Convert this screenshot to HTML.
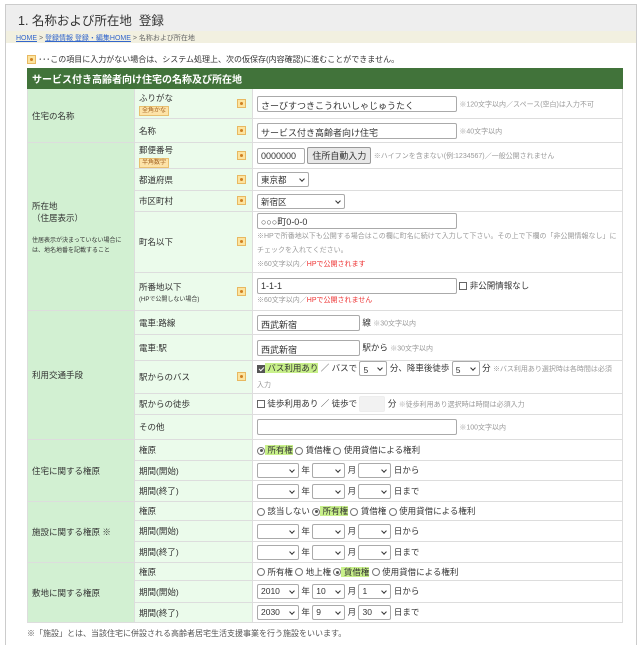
<!DOCTYPE html>
<html style="height:645px;overflow:hidden"><head><meta charset="utf-8"><style>
*{margin:0;padding:0;box-sizing:border-box}
body{width:644px;height:645px;background:#fff;font-family:"Liberation Sans","Noto Sans CJK JP",sans-serif;font-size:9px;color:#333;position:relative;overflow:hidden}
.frame{position:absolute;left:5px;top:4px;width:632px;height:645px;border:1px solid #ccc;border-bottom:none}
.title{position:absolute;left:6px;top:5px;width:630px;height:26px;background:#eee;font-size:12.5px;padding:5px 0 0 12px;color:#333}
.bc{position:absolute;left:6px;top:31px;width:630px;height:12px;background:#f2f0e0;font-size:7px;padding:2px 0 0 10px;color:#666}
.bc a{color:#3366cc;text-decoration:underline}
.req{display:inline-block;width:9px;height:9px;background:#fce4a0;border:1px solid #e8b860;position:relative;vertical-align:middle}
.req:after{content:"";position:absolute;left:2px;top:2px;width:3px;height:3px;background:#d08020;border-radius:50%}
.notice{position:absolute;left:27px;top:54px;font-size:8px}
table{position:absolute;left:27px;top:68px;width:595px;border-collapse:collapse;table-layout:fixed}
td{border:1px solid #ddd;vertical-align:middle;padding:0 4px;font-size:8.5px}
th{background:#41733a;color:#fff;text-align:left;height:20px;padding-left:4px;font-size:10px;border:1px solid #41733a}
.c1{background:#d2f0d2;color:#333}
.c2{background:#ebfbeb;position:relative}
.c2 .req{position:absolute;right:6px;top:50%;margin-top:-5px}
.tag{display:inline-block;background:#fde3a8;border:1px solid #e8c070;font-size:6px;padding:0 2px;color:#a06020;line-height:8px}
.inp{display:inline-block;border:1px solid #aaa;border-radius:2px;height:16px;vertical-align:middle;padding:2px 3px;font-size:9px;background:#fff}
.n{color:#999;font-size:7px}
.r{color:#e33}
.sel{display:inline-block;border:1px solid #aaa;border-radius:2px;height:15px;vertical-align:middle;padding:1px 3px;font-size:8.5px;background:#fff;position:relative}
.sel:after{content:"";position:absolute;right:4px;top:4px;width:3px;height:3px;border-right:1px solid #333;border-bottom:1px solid #333;transform:rotate(45deg)}
.btn{display:inline-block;border:1px solid #999;background:#e8e8e8;font-size:9px;padding:1px 4px;vertical-align:middle;border-radius:2px}
.cb{display:inline-block;width:8px;height:8px;border:1px solid #666;vertical-align:middle;background:#fff;position:relative}
.cb.on{background:#555;border-color:#555}
.cb.on:after{content:"";position:absolute;left:2px;top:0px;width:2px;height:4px;border-right:1px solid #fff;border-bottom:1px solid #fff;transform:rotate(45deg)}
.rd{display:inline-block;width:8px;height:8px;border:1px solid #777;border-radius:50%;vertical-align:middle;background:#fff;position:relative}
.rd.on:after{content:"";position:absolute;left:1.5px;top:1.5px;width:3px;height:3px;background:#555;border-radius:50%}
.hl{background:#c8f08a}
.foot{position:absolute;left:27px;top:628px;font-size:8px;color:#555}
</style></head><body>
<div class="frame"></div>
<div class="title">1. 名称および所在地&nbsp;&nbsp;登録</div>
<div class="bc"><a>HOME</a> &gt; <a>登録情報 登録・編集HOME</a> &gt; 名称および所在地</div>
<div class="notice"><span class="req"></span>&nbsp;･･･この項目に入力がない場合は、システム処理上、次の仮保存(内容確認)に進むことができません。</div>
<table>
<colgroup><col style="width:107px"><col style="width:118px"><col style="width:370px"></colgroup>
<tr><th colspan="3">サービス付き高齢者向け住宅の名称及び所在地</th></tr>
<tr style="height:30px"><td class="c1" rowspan="2">住宅の名称</td><td class="c2">ふりがな<br><span class="tag">全角かな</span><span class="req"></span></td><td><span class="inp" style="width:200px">さーびすつきこうれいしゃじゅうたく</span> <span class="n">※120文字以内／スペース(空白)は入力不可</span></td></tr>
<tr style="height:24px"><td class="c2">名称<span class="req"></span></td><td><span class="inp" style="width:200px">サービス付き高齢者向け住宅</span> <span class="n">※40文字以内</span></td></tr>
<tr style="height:26px"><td class="c1" rowspan="5">所在地<br>（住居表示）<br><br><span style="font-size:6px">住居表示が決まっていない場合には、地名地番を記載すること</span></td><td class="c2">郵便番号<br><span class="tag">半角数字</span><span class="req"></span></td><td><span class="inp" style="width:48px">0000000</span> <span class="btn">住所自動入力</span> <span class="n">※ハイフンを含まない(例:1234567)／一般公開されません</span></td></tr>
<tr style="height:22px"><td class="c2">都道府県<span class="req"></span></td><td><span class="sel" style="width:52px">東京都</span></td></tr>
<tr style="height:21px"><td class="c2">市区町村<span class="req"></span></td><td><span class="sel" style="width:88px">新宿区</span></td></tr>
<tr style="height:61px"><td class="c2">町名以下<span class="req"></span></td><td style="line-height:12px"><span class="inp" style="width:200px">○○○町0-0-0</span><br><span class="n">※HPで所番地以下も公開する場合はこの欄に町名に続けて入力して下さい。その上で下欄の「非公開情報なし」にチェックを入れてください。<br>※60文字以内／<span class="r">HPで公開されます</span></span></td></tr>
<tr style="height:38px"><td class="c2">所番地以下<br><span style="font-size:6px">(HPで公開しない場合)</span><span class="req"></span></td><td><span class="inp" style="width:200px">1-1-1</span> <span class="cb"></span> 非公開情報なし<br><span class="n">※60文字以内／<span class="r">HPで公開されません</span></span></td></tr>
<tr style="height:24px"><td class="c1" rowspan="5">利用交通手段</td><td class="c2">電車:路線</td><td><span class="inp" style="width:103px">西武新宿</span> 線 <span class="n">※30文字以内</span></td></tr>
<tr style="height:26px"><td class="c2">電車:駅</td><td><span class="inp" style="width:103px">西武新宿</span> 駅から <span class="n">※30文字以内</span></td></tr>
<tr style="height:33px"><td class="c2">駅からのバス<span class="req"></span></td><td style="line-height:15px"><span class="cb on"></span><span class="hl"> バス利用あり</span> ／ バスで <span class="sel" style="width:28px">5</span> 分、降車後徒歩 <span class="sel" style="width:28px">5</span> 分 <span class="n">※バス利用あり選択時は各時間は必須入力</span></td></tr>
<tr style="height:21px"><td class="c2">駅からの徒歩</td><td><span class="cb"></span> 徒歩利用あり ／ 徒歩で <span class="inp" style="width:26px;background:#f2f2f2;border-color:#eee"></span> 分 <span class="n">※徒歩利用あり選択時は時間は必須入力</span></td></tr>
<tr style="height:25px"><td class="c2">その他</td><td><span class="inp" style="width:200px"></span> <span class="n">※100文字以内</span></td></tr>
<tr style="height:21px"><td class="c1" rowspan="3">住宅に関する権原</td><td class="c2">権原</td><td><span class="rd on"></span><span class="hl"> 所有権</span> <span class="rd"></span> 賃借権 <span class="rd"></span> 使用貸借による権利</td></tr>
<tr style="height:20px"><td class="c2">期間(開始)</td><td><span class="sel" style="width:42px"></span> 年 <span class="sel" style="width:33px"></span> 月 <span class="sel" style="width:33px"></span> 日から</td></tr>
<tr style="height:21px"><td class="c2">期間(終了)</td><td><span class="sel" style="width:42px"></span> 年 <span class="sel" style="width:33px"></span> 月 <span class="sel" style="width:33px"></span> 日まで</td></tr>
<tr style="height:19px"><td class="c1" rowspan="3">施設に関する権原 ※</td><td class="c2">権原</td><td><span class="rd"></span> 該当しない <span class="rd on"></span><span class="hl"> 所有権</span> <span class="rd"></span> 賃借権 <span class="rd"></span> 使用貸借による権利</td></tr>
<tr style="height:21px"><td class="c2">期間(開始)</td><td><span class="sel" style="width:42px"></span> 年 <span class="sel" style="width:33px"></span> 月 <span class="sel" style="width:33px"></span> 日から</td></tr>
<tr style="height:21px"><td class="c2">期間(終了)</td><td><span class="sel" style="width:42px"></span> 年 <span class="sel" style="width:33px"></span> 月 <span class="sel" style="width:33px"></span> 日まで</td></tr>
<tr style="height:18px"><td class="c1" rowspan="3">敷地に関する権原</td><td class="c2">権原</td><td><span class="rd"></span> 所有権 <span class="rd"></span> 地上権 <span class="rd on"></span><span class="hl"> 賃借権</span> <span class="rd"></span> 使用貸借による権利</td></tr>
<tr style="height:22px"><td class="c2">期間(開始)</td><td><span class="sel" style="width:42px">2010</span> 年 <span class="sel" style="width:33px">10</span> 月 <span class="sel" style="width:33px">1</span> 日から</td></tr>
<tr style="height:20px"><td class="c2">期間(終了)</td><td><span class="sel" style="width:42px">2030</span> 年 <span class="sel" style="width:33px">9</span> 月 <span class="sel" style="width:33px">30</span> 日まで</td></tr>
</table>
<div class="foot">※「施設」とは、当該住宅に併設される高齢者居宅生活支援事業を行う施設をいいます。</div>
</body></html>
